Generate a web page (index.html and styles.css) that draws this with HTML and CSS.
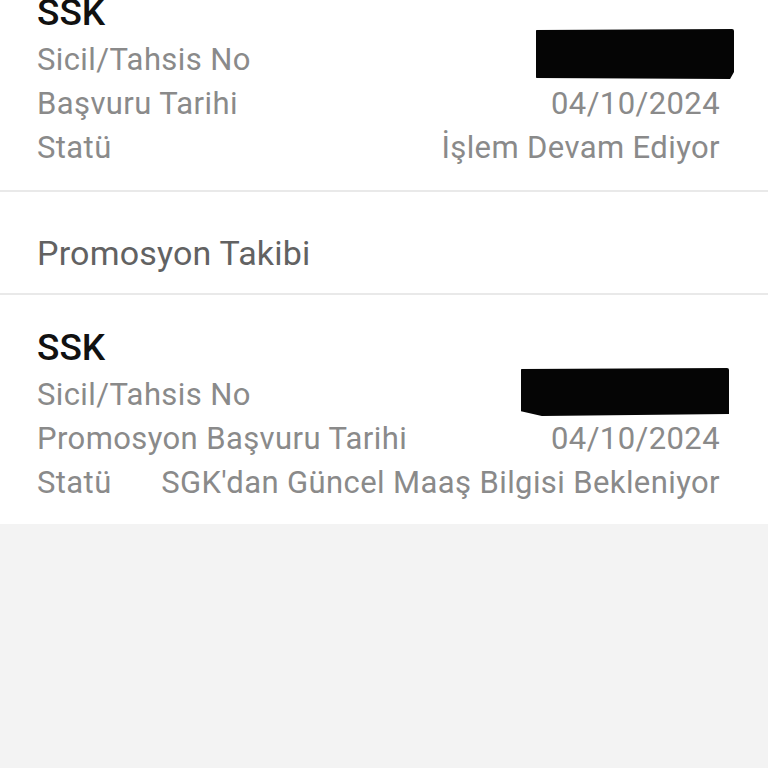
FILE: index.html
```html
<!DOCTYPE html>
<html lang="tr">
<head>
    <meta charset="UTF-8">
    <meta name="viewport" content="width=device-width, initial-scale=1.0">
    <title>Başvuru Takibi</title>
    <link rel="stylesheet" href="styles.css">
</head>
<body>

    <div class="card first">
        <div class="card-title">SSK</div>
        <div class="row">
            <span class="label">Sicil/Tahsis No</span>
            <span class="value"></span>
            <span class="redact redact-one"></span>
        </div>
        <div class="row">
            <span class="label">Başvuru Tarihi</span>
            <span class="value">04/10/2024</span>
        </div>
        <div class="row">
            <span class="label">Statü</span>
            <span class="value">İşlem Devam Ediyor</span>
        </div>
    </div>

    <div class="section-head">Promosyon Takibi</div>

    <div class="card">
        <div class="card-title">SSK</div>
        <div class="row">
            <span class="label">Sicil/Tahsis No</span>
            <span class="value"></span>
            <span class="redact redact-two"></span>
        </div>
        <div class="row">
            <span class="label">Promosyon Başvuru Tarihi</span>
            <span class="value">04/10/2024</span>
        </div>
        <div class="row">
            <span class="label">Statü</span>
            <span class="value">SGK'dan Güncel Maaş Bilgisi Bekleniyor</span>
        </div>
    </div>

</body>
</html>
```

FILE: styles.css
```css
body {
    margin: 0;
    background-color: #f3f3f3;
    font-family: Roboto, "Noto Sans", sans-serif;
    overflow: hidden;
}

.card {
    background-color: #ffffff;
    padding: 28px 48px 19px 37px;
    box-shadow: 0 1px 1px rgba(0, 0, 0, 0.06);
}

.card.first {
    margin-top: -40px;
    padding-bottom: 20px;
    border-bottom: 2px solid #e9e9e9;
    box-shadow: none;
}

.card-title {
    font-size: 37px;
    font-weight: 500;
    line-height: 50px;
    color: #111111;
}

.row {
    position: relative;
    display: flex;
    justify-content: space-between;
    font-size: 31px;
    line-height: 44px;
    color: #8a8a8a;
    letter-spacing: 0.4px;
}

.section-head {
    background-color: #ffffff;
    padding: 39px 37px 18px;
    font-size: 34px;
    line-height: 44px;
    color: #626262;
    letter-spacing: 0.2px;
    border-bottom: 2px solid #e9e9e9;
}

.redact {
    position: absolute;
    background-color: #050505;
    border-radius: 2px;
}

.redact-one {
    top: -9px;
    right: -14px;
    width: 198px;
    height: 50px;
    clip-path: polygon(0 2%, 100% 0, 100% 86%, 98% 100%, 0 98%);
}

.redact-two {
    top: -5px;
    right: -9px;
    width: 208px;
    height: 48px;
    clip-path: polygon(0 2%, 100% 0, 100% 96%, 10% 100%, 0 90%);
}
```
